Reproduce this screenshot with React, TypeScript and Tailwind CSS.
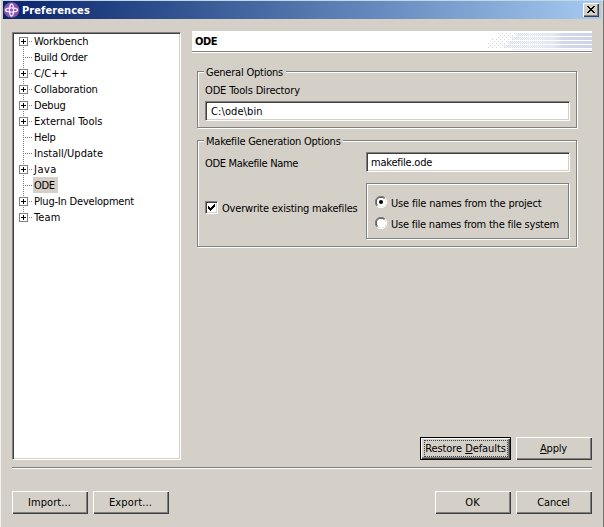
import React from 'react';

const sunken =
  'bg-white border border-t-[#808080] border-l-[#808080] border-b-white border-r-white shadow-[inset_1px_1px_0_#404040,inset_-1px_-1px_0_#d4d0c8]';
const raised =
  'bg-[#d4d0c8] shadow-[inset_1px_1px_0_#fff,inset_-1px_-1px_0_#404040,inset_-2px_-2px_0_#808080]';
const etched = 'border border-[#808080] shadow-[inset_1px_1px_0_#fff,1px_1px_0_#fff]';

const tree = [
  { name: 'Workbench', children: true, spacing: 'tracking-[-0.1px]' },
  { name: 'Build Order', children: false, spacing: 'tracking-[-0.25px]' },
  { name: 'C/C++', children: true, spacing: 'tracking-[0px]' },
  { name: 'Collaboration', children: true, spacing: 'tracking-[-0.18px]' },
  { name: 'Debug', children: true, spacing: 'tracking-[-0.2px]' },
  { name: 'External Tools', children: true, spacing: 'tracking-[0px]' },
  { name: 'Help', children: false, spacing: 'tracking-[-0.3px]' },
  { name: 'Install/Update', children: false, spacing: 'tracking-[0px]' },
  { name: 'Java', children: true, spacing: 'tracking-[0.5px]' },
  { name: 'ODE', children: false, spacing: 'tracking-[-0.3px]' },
  { name: 'Plug-In Development', children: true, spacing: 'tracking-[-0.2px]' },
  { name: 'Team', children: true, spacing: 'tracking-[0.1px]' },
];

function Branch({ expandable, first, last }: { expandable: boolean; first: boolean; last: boolean }) {
  return (
    <svg className="ml-[6px] h-4 w-[14px] shrink-0" viewBox="0 0 14 16" fill="none" shapeRendering="crispEdges">
      <path d={`M4.5 ${first ? 8 : 0}V${last ? 8 : 16}`} stroke="#808080" strokeDasharray="1 1" />
      <path d="M4 8.5H13" stroke="#808080" strokeDasharray="1 1" />
      {expandable && (
        <>
          <rect x=".5" y="4.5" width="8" height="8" fill="#fff" stroke="#808080" />
          <path d="M2 8.5H7M4.5 6V11" stroke="#000" />
        </>
      )}
    </svg>
  );
}

function Button({ children }: { children: React.ReactNode }) {
  return (
    <button className={`flex h-[23px] w-[76px] shrink-0 items-center justify-center pt-px ${raised}`}>{children}</button>
  );
}

function Radio({ checked = false }: { checked?: boolean }) {
  return (
    <svg className="h-3 w-3 shrink-0" viewBox="0 0 12 12">
      <circle cx="6" cy="6" r="5" fill="#fff" />
      <path d="M1.9 10.1A5.5 5.5 0 0 1 10.1 1.9" fill="none" stroke="#808080" />
      <path d="M2.6 9.4A4.6 4.6 0 0 1 9.4 2.6" fill="none" stroke="#404040" />
      <path d="M10.1 1.9A5.5 5.5 0 0 1 1.9 10.1" fill="none" stroke="#fff" />
      {checked && <circle cx="6" cy="6" r="2" />}
    </svg>
  );
}

export default function App() {
  return (
    <div className="flex h-[527px] w-[604px] flex-col overflow-hidden border-t border-r border-l border-t-[#c3d7e4] border-r-[#77746f] border-l-[#f3f2ef] bg-[#d4d0c8] font-['DejaVu_Sans_Condensed','DejaVu_Sans',sans-serif] text-[11px] leading-[18px] whitespace-nowrap text-black">
      <header className="mr-[2px] ml-[2px] flex h-[18px] shrink-0 items-center bg-linear-to-r from-[#0a246a] to-[#a6caf0] pr-[2px]">
        <svg className="h-4 w-[17px]" viewBox="0 0 17 16">
          <circle cx="8.5" cy="8" r="7.8" fill="#8558ab" />
          <g fill="none" stroke="#f4e2ff" strokeWidth="1.4">
            <ellipse cx="8.5" cy="8" rx="2" ry="6" />
            <ellipse cx="8.5" cy="8" rx="6" ry="2" />
          </g>
          <path d="M8.5 6.5v3M7 8h3" stroke="#8558ab" />
        </svg>
        <h1 className="ml-[2px] h-[18px] grow pt-px font-bold tracking-[0.08px] text-white">Preferences</h1>
        <button aria-label="Close" className={`flex h-[14px] w-4 items-center justify-center pr-px pb-px ${raised}`}>
          <svg className="h-[7px] w-2" viewBox="0 0 8 7" shapeRendering="crispEdges">
            <path d="M0 0h2v1h1v1h2V1h1V0h2v1H7v1H6v1H5v1h1v1h1v1h1v1H6V6H5V5H3v1H2v1H0V6h1V5h1V4h1V3H2V2H1V1H0z" />
          </svg>
        </button>
      </header>

      <main className="mt-3 ml-[11px] flex h-[429px] w-[580px] shrink-0 gap-[11px]">
        <nav className={`mt-px h-[428px] w-[169px] shrink-0 ${sunken}`}>
          <ul>
            {tree.map((item, i) => (
              <li key={item.name} className="flex h-4">
                <Branch expandable={item.children} first={i === 0} last={i === tree.length - 1} />
                <span className={`h-4 pr-[3px] pl-px ${item.spacing} ${item.name === 'ODE' ? 'bg-[#d4d0c8]' : ''}`}>
                  {item.name}
                </span>
              </li>
            ))}
          </ul>
        </nav>

        <section className="flex grow flex-col">
          <div className="flex h-[22px] shrink-0 justify-between border-b border-white bg-white shadow-[inset_0_-1px_0_#808080]">
            <h2 className="pt-[2px] pl-[3px] font-bold tracking-[-0.5px]">ODE</h2>
            <svg className="h-5 w-[104px]" viewBox="0 0 104 20" shapeRendering="crispEdges">
              <defs>
                <linearGradient id="fade">
                  <stop offset="0" stopColor="#fff" stopOpacity="0" />
                  <stop offset=".6" stopColor="#d3daeb" />
                  <stop offset="1" stopColor="#cbd3e6" />
                </linearGradient>
                <pattern id="sparse" width="4" height="4" patternUnits="userSpaceOnUse">
                  <path d="M0 .5h1M2 2.5h1" stroke="#c9d2ea" />
                </pattern>
                <pattern id="dense" width="2" height="2" patternUnits="userSpaceOnUse">
                  <path d="M0 .5h1M1 1.5h1" stroke="#d0d8ec" />
                </pattern>
              </defs>
              <path d="M10 2H30V17H0V12H3V7H8z" fill="url(#sparse)" />
              <path d="M28 2h34v3H28zM24 6h38v3H24zM20 10h42v3H20zM16 14h46v3H16z" fill="url(#dense)" />
              <path d="M40 2h64v3H40zM36 6h68v3H36zM32 10h72v3H32zM28 14h76v3H28z" fill="url(#fade)" />
              <path d="M24 18.5H104" stroke="#e9edf6" />
            </svg>
          </div>

          <fieldset className={`mt-[18px] ml-[5px] h-[57px] w-[380px] shrink-0 pl-[7px] ${etched}`}>
            <div className="-mt-[8px] ml-[-1px] h-[17px] w-[82px] bg-[#d4d0c8] pl-[2px] tracking-[-0.22px]">General Options</div>
            <div className="mt-px h-4 tracking-[-0.15px]">ODE Tools Directory</div>
            <div className={`mt-[3px] h-[20px] w-[365px] pl-[5px] leading-[20px] tracking-[0.1px] ${sunken}`}>C:\ode\bin</div>
          </fieldset>

          <fieldset className={`mt-[12px] ml-[5px] h-[107px] w-[380px] shrink-0 pl-[7px] ${etched}`}>
            <div className="-mt-[8px] ml-[-1px] h-[17px] w-[139px] bg-[#d4d0c8] pl-[2px] tracking-[-0.23px]">
              Makefile Generation Options
            </div>
            <div className="mt-[2px] flex h-5">
              <span className="w-[161px] pt-[3px] tracking-[-0.3px]">ODE Makefile Name</span>
              <div className={`h-5 w-[204px] pl-[4px] leading-[19px] tracking-[-0.22px] ${sunken}`}>makefile.ode</div>
            </div>
            <div className="mt-[11px] flex h-14">
              <label className="flex h-12 w-[161px] pt-[18px]">
                <span className={`flex h-[13px] w-[13px] shrink-0 items-center justify-center ${sunken}`}>
                  <svg className="h-[7px] w-[7px]" viewBox="0 0 7 7" shapeRendering="crispEdges">
                    <path d="M0 2h1v1h1v1h1V3h1V2h1V1h1V0h1v3H6v1H5v1H4v1H3v1H2V6H1V5H0z" />
                  </svg>
                </span>
                <span className="-mt-px ml-1 tracking-[-0.2px]">Overwrite existing makefiles</span>
              </label>
              <div className={`h-14 w-[203px] pt-[11px] pl-2 tracking-[-0.22px] ${etched}`}>
                <label className="flex h-[21px] items-start gap-1">
                  <span className="mt-[1px] flex"><Radio checked /></span>
                  <span className="tracking-[-0.18px]">Use file names from the project</span>
                </label>
                <label className="flex h-[21px] items-start gap-1">
                  <span className="mt-[1px] flex"><Radio /></span>
                  <span>Use file names from the file system</span>
                </label>
              </div>
            </div>
          </fieldset>

          <div className="mt-auto flex justify-end gap-[5px]">
            <button className="flex h-[23px] w-[91px] items-center justify-center border border-black bg-[#d4d0c8] shadow-[inset_1px_1px_0_#fff,inset_-1px_-1px_0_#404040,inset_-2px_-2px_0_#808080]">
              <span className="flex h-[17px] w-[84px] items-center justify-center border border-dotted border-[#404040] pt-px tracking-[-0.08px]">
                <span>Restore <u>D</u>efaults</span>
              </span>
            </button>
            <Button><span className="pr-px tracking-[-0.2px]"><u>A</u>pply</span></Button>
          </div>
        </section>
      </main>

      <div className="mt-[7px] ml-[11px] h-[2px] w-[580px] shrink-0 border-t border-t-[#808080] bg-white" />
      <footer className="mt-[22px] ml-[11px] flex w-[580px] justify-between">
        <div className="flex gap-[5px]">
          <Button><span className="pr-px tracking-[0.1px]">Import...</span></Button>
          <Button><span className="pr-px tracking-[0.15px]">Export...</span></Button>
        </div>
        <div className="flex gap-[5px]">
          <Button><span className="pr-px">OK</span></Button>
          <Button><span className="pr-px tracking-[-0.2px]">Cancel</span></Button>
        </div>
      </footer>
    </div>
  );
}
